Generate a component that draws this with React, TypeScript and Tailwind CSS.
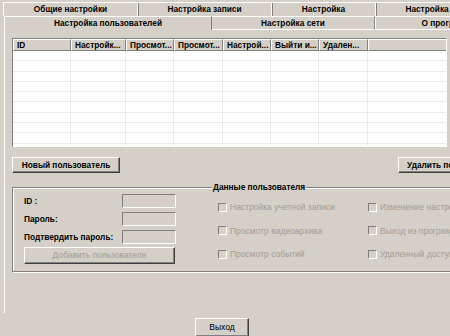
import React from "react";

const raised =
  "border border-t-white border-l-white border-r-[#404040] border-b-[#404040] shadow-[inset_-1px_-1px_0_#808080]";

const columns = [
  { label: "ID", w: "w-[58px]" },
  { label: "Настройк...", w: "w-[55px]" },
  { label: "Просмот...", w: "w-[48px]" },
  { label: "Просмот...", w: "w-[49px]" },
  { label: "Настрой...", w: "w-[48px]" },
  { label: "Выйти и...", w: "w-[48px]" },
  { label: "Удален...", w: "w-[49px]" },
];

const rights = [
  ["Настройка учетной записи", "Изменение настроек"],
  ["Просмотр видеоархива", "Выход из программы"],
  ["Просмотр событий", "Удаленный доступ"],
];

const Check = ({ label }: { label: string }) => (
  <div className="flex items-center gap-[3px]">
    <span className="h-[9px] w-[9px] shrink-0 border border-t-[#808080] border-l-[#808080] border-r-white border-b-white bg-[#d4d0c8]" />
    <span className="whitespace-nowrap text-[8.5px] text-[#a19d96]">{label}</span>
  </div>
);

export default function App() {
  return (
    <div className="relative h-[336px] w-[450px] overflow-hidden bg-[#d4d0c8] font-['Liberation_Sans',Arial,sans-serif] text-black">
      {/* tabs, back row */}
      <div className="ml-[3px] mt-[2px] flex h-[14px] text-[8.3px] font-bold">
        <div className="flex w-[134px] shrink-0 items-center justify-center border-t border-l border-t-white border-l-white">
          Общие настройки
        </div>
        <div className="flex w-[134px] shrink-0 items-center justify-center border-t border-l border-t-white border-l-white shadow-[inset_1px_0_0_#808080]">
          Настройка записи
        </div>
        <div className="flex w-[104px] shrink-0 items-center justify-center border-t border-l border-t-white border-l-white shadow-[inset_1px_0_0_#808080]">
          Настройка
        </div>
        <div className="flex w-[110px] shrink-0 items-center justify-center whitespace-nowrap border-t border-l border-t-white border-l-white shadow-[inset_1px_0_0_#808080]">
          Настройка 3
        </div>
      </div>
      {/* tabs, front row */}
      <div className="ml-[4px] flex h-[14px] text-[8.3px] font-bold">
        <div className="flex w-[208px] shrink-0 items-center justify-center border-t border-l border-t-white border-l-white border-r border-r-[#808080]">
          Настройка пользователей
        </div>
        <div className="flex w-[163px] shrink-0 items-center justify-center border-t border-t-white border-b border-b-white border-r border-r-[#808080]">
          Настройка сети
        </div>
        <div className="flex w-[146px] shrink-0 items-center justify-center whitespace-nowrap border-t border-l border-t-white border-l-white border-b border-b-white">
          О программе
        </div>
      </div>

      {/* panel */}
      <div className="ml-[4px] h-[283px] w-[470px] border-l border-l-white pl-[7px] pt-[8px]">
        <div className="h-[109px] w-[435px] overflow-hidden border border-t-[#808080] border-l-[#808080] border-r-white border-b-white bg-white">
          <div className="flex h-[12px] bg-[#d4d0c8] text-[8.3px] font-bold">
            {columns.map((c, i) => (
              <div
                key={i}
                className={`${c.w} shrink-0 overflow-hidden whitespace-nowrap border-r border-b border-t border-l border-t-white border-l-white border-r-[#808080] border-b-[#808080] pl-[3px] leading-[10px]`}
              >
                {c.label}
              </div>
            ))}
            <div className="flex-1 border-t border-l border-b border-t-white border-l-white border-b-[#808080]" />
          </div>
          {Array.from({ length: 10 }).map((_, r) => (
            <div key={r} className="flex h-[10.3px] border-b border-b-[#ecebe7]">
              {columns.map((c, i) => (
                <div key={i} className={`${c.w} shrink-0 border-r border-r-[#ecebe7]`} />
              ))}
            </div>
          ))}
        </div>

        <div className="mt-[10px] flex">
          <button className={`${raised} h-[16px] w-[108px] shrink-0 whitespace-nowrap bg-[#d4d0c8] text-[8.3px] font-bold leading-none`}>
            Новый пользователь
          </button>
          <button className={`${raised} ml-[278px] h-[16px] w-[112px] shrink-0 whitespace-nowrap bg-[#d4d0c8] text-[8.3px] font-bold leading-none`}>
            Удалить пользователя
          </button>
        </div>

        {/* group box */}
        <div className="relative mt-[14px] h-[85px] w-[460px] border border-[#808080] shadow-[inset_1px_1px_0_#fff,1px_1px_0_#fff]">
          <span className="absolute left-[199px] top-[-6px] bg-[#d4d0c8] px-[1px] text-[8.3px] font-bold leading-[10px]">
            Данные пользователя
          </span>
          <div className="flex pl-[11px] pt-[6px]">
            <div className="flex w-[152px] shrink-0 flex-col">
              {["ID :", "Пароль:", "Подтвердить пароль:"].map((l) => (
                <div key={l} className="mb-[4px] flex h-[14px] items-center justify-between text-[8.3px] font-bold">
                  <span>{l}</span>
                  <span className="h-[14px] w-[54px] border border-t-[#808080] border-l-[#808080] border-r-white border-b-white bg-[#d4d0c8]" />
                </div>
              ))}
              <button className={`${raised} mt-[-1px] h-[17px] w-[151px] bg-[#d4d0c8] text-[8.5px] text-[#a19d96]`}>
                Добавить пользователя
              </button>
            </div>
            <div className="ml-[42px] grid shrink-0 grid-cols-[150px_150px] pt-[7px]">
              {rights.map(([a, b]) => (
                <React.Fragment key={a}>
                  <div className="h-[23.5px]">
                    <Check label={a} />
                  </div>
                  <div className="h-[23.5px]">
                    <Check label={b} />
                  </div>
                </React.Fragment>
              ))}
            </div>
          </div>
        </div>
      </div>

      <button className={`${raised} ml-[195px] mt-[5px] h-[19px] w-[54px] bg-[#d4d0c8] text-[8.5px]`}>
        Выход
      </button>
    </div>
  );
}
